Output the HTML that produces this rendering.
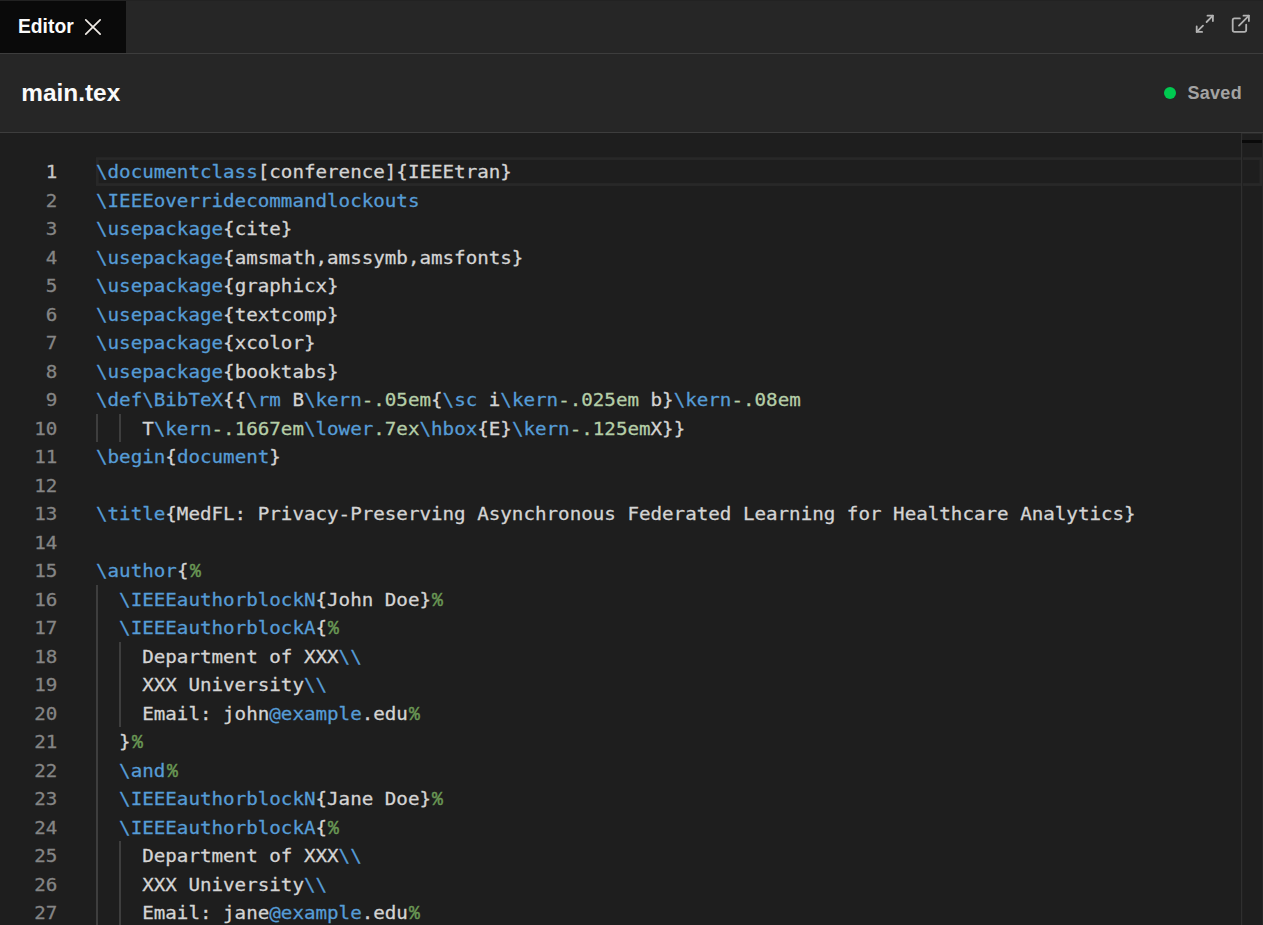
<!DOCTYPE html>
<html lang="en">
<head>
<meta charset="utf-8">
<title>Editor - main.tex</title>
<style>
html,body{margin:0;padding:0;}
body{width:1263px;height:925px;overflow:hidden;background:#262626;position:relative;font-family:"Liberation Sans",sans-serif;}
.abs{position:absolute;}
#topline{left:0;top:0;width:1263px;height:1px;background:#222222;}
#tab{left:0;top:1px;width:126px;height:52px;background:#0a0a0a;}
#tabtxt{left:17.7px;top:12px;font-size:20.4px;transform:scaleX(0.945);transform-origin:0 0;font-weight:bold;color:#fafafa;line-height:28px;white-space:nowrap;}
#tabborder{left:0;top:53px;width:1263px;height:1px;background:#3d3d3d;}
#title{left:21.3px;top:77px;font-size:24.4px;font-weight:bold;color:#fafafa;line-height:32px;white-space:nowrap;}
#hdrborder{left:0;top:132px;width:1263px;height:1px;background:#3d3d3d;}
#dot{left:1164px;top:86.8px;width:12.2px;height:12.2px;border-radius:50%;background:#00c950;}
#saved{left:1187.6px;top:80px;font-size:18px;letter-spacing:0.25px;font-weight:bold;color:#a3a3a3;line-height:26px;white-space:nowrap;}
#editor{left:0;top:133px;width:1262px;height:792px;background:#1e1e1e;overflow:hidden;}
#ed{-webkit-text-stroke:0.3px;position:absolute;left:0;top:-133px;width:1262px;height:925px;font-family:"DejaVu Sans Mono","Liberation Mono",monospace;font-size:19.2px;line-height:28.5px;color:#d4d4d4;}
.ln{transform:scaleY(0.92);transform-origin:0 19.8px;position:absolute;left:0;width:57.3px;text-align:right;color:#858585;height:28.5px;white-space:pre;}
.ln.a{color:#c6c6c6;}
.cl{transform:scaleY(0.92);transform-origin:0 19.8px;position:absolute;left:96px;height:28.5px;white-space:pre;}
.k{color:#569cd6;}
.c{color:#6a9955;display:inline-block;font-family:"Liberation Mono",monospace;font-size:21.5px;transform:scaleX(0.84);transform-origin:0 50%;position:relative;left:1.2px;-webkit-text-stroke:0.5px;}
.n{color:#b5cea8;}
.ig{position:absolute;width:2px;background:#3e3e3e;}
#vline{left:1241px;top:133px;width:1px;height:792px;background:#2f2f2f;box-shadow:1px 0 0 #212121;}
#ovtop{left:1242px;top:133px;width:20px;height:1px;background:#2a2a2a;}
#ovcur{left:1242.2px;top:139.9px;width:19.8px;height:3px;background:#0a0a0a;}
svg{position:absolute;overflow:visible;}
</style>
</head>
<body>
<div id="topline" class="abs"></div>
<div id="tab" class="abs"></div>
<div id="tabtxt" class="abs">Editor</div>
<svg id="xicon" style="left:84px;top:18.2px" width="18" height="18" viewBox="0 0 18 18"><path d="M1.75 1.8 L16.15 16.2 M16.15 1.8 L1.75 16.2" stroke="#f0ebe6" stroke-width="1.7" stroke-linecap="round" fill="none"/></svg>
<svg id="ic1" style="left:1193.9px;top:12.5px" width="21.6" height="21.6" viewBox="0 0 24 24" fill="none" stroke="#b2b2b2" stroke-width="2" stroke-linecap="round" stroke-linejoin="round"><polyline points="15 3 21 3 21 9"/><polyline points="9 21 3 21 3 15"/><line x1="21" x2="14" y1="3" y2="10"/><line x1="3" x2="10" y1="21" y2="14"/></svg>
<svg id="ic2" style="left:1229.7px;top:12.5px" width="21.6" height="21.6" viewBox="0 0 24 24" fill="none" stroke="#b2b2b2" stroke-width="2" stroke-linecap="round" stroke-linejoin="round"><path d="M15 3h6v6"/><path d="M10 14 21 3"/><path d="M18 13v6a2 2 0 0 1-2 2H5a2 2 0 0 1-2-2V8a2 2 0 0 1 2-2h6"/></svg>
<div id="tabborder" class="abs"></div>
<div id="title" class="abs">main.tex</div>
<div id="dot" class="abs"></div>
<div id="saved" class="abs">Saved</div>
<div id="hdrborder" class="abs"></div>
<div id="editor" class="abs">
<div id="ed">
<svg id="curline" style="left:0;top:0" width="1263" height="925"><rect x="97.3" y="158.55" width="1163.6" height="26.0" fill="none" stroke="#282828" stroke-width="2.7"/></svg>
<div class="ig" style="left:96.00px;top:413.70px;height:28.50px"></div>
<div class="ig" style="left:119.00px;top:413.70px;height:28.50px"></div>
<div class="ig" style="left:96.00px;top:584.70px;height:370.50px"></div>
<div class="ig" style="left:119.00px;top:641.70px;height:85.50px"></div>
<div class="ig" style="left:119.00px;top:841.20px;height:114.00px"></div>
<div class="ln a" style="top:158.20px">1</div>
<div class="cl" style="top:158.20px"><span class="k">\documentclass</span><span>[conference]{IEEEtran}</span></div>
<div class="ln" style="top:186.70px">2</div>
<div class="cl" style="top:186.70px"><span class="k">\IEEEoverridecommandlockouts</span></div>
<div class="ln" style="top:215.20px">3</div>
<div class="cl" style="top:215.20px"><span class="k">\usepackage</span><span>{cite}</span></div>
<div class="ln" style="top:243.70px">4</div>
<div class="cl" style="top:243.70px"><span class="k">\usepackage</span><span>{amsmath,amssymb,amsfonts}</span></div>
<div class="ln" style="top:272.20px">5</div>
<div class="cl" style="top:272.20px"><span class="k">\usepackage</span><span>{graphicx}</span></div>
<div class="ln" style="top:300.70px">6</div>
<div class="cl" style="top:300.70px"><span class="k">\usepackage</span><span>{textcomp}</span></div>
<div class="ln" style="top:329.20px">7</div>
<div class="cl" style="top:329.20px"><span class="k">\usepackage</span><span>{xcolor}</span></div>
<div class="ln" style="top:357.70px">8</div>
<div class="cl" style="top:357.70px"><span class="k">\usepackage</span><span>{booktabs}</span></div>
<div class="ln" style="top:386.20px">9</div>
<div class="cl" style="top:386.20px"><span class="k">\def\BibTeX</span><span>{{</span><span class="k">\rm</span><span> B</span><span class="k">\kern</span><span class="n">-.05em</span><span>{</span><span class="k">\sc</span><span> i</span><span class="k">\kern</span><span class="n">-.025em</span><span> b}</span><span class="k">\kern</span><span class="n">-.08em</span></div>
<div class="ln" style="top:414.70px">10</div>
<div class="cl" style="top:414.70px"><span>    T</span><span class="k">\kern</span><span class="n">-.1667em</span><span class="k">\lower</span><span class="n">.7ex</span><span class="k">\hbox</span><span>{E}</span><span class="k">\kern</span><span class="n">-.125em</span><span>X}}</span></div>
<div class="ln" style="top:443.20px">11</div>
<div class="cl" style="top:443.20px"><span class="k">\begin</span><span>{</span><span class="k">document</span><span>}</span></div>
<div class="ln" style="top:471.70px">12</div>
<div class="ln" style="top:500.20px">13</div>
<div class="cl" style="top:500.20px"><span class="k">\title</span><span>{MedFL: Privacy-Preserving Asynchronous Federated Learning for Healthcare Analytics}</span></div>
<div class="ln" style="top:528.70px">14</div>
<div class="ln" style="top:557.20px">15</div>
<div class="cl" style="top:557.20px"><span class="k">\author</span><span>{</span><span class="c">%</span></div>
<div class="ln" style="top:585.70px">16</div>
<div class="cl" style="top:585.70px"><span>  </span><span class="k">\IEEEauthorblockN</span><span>{John Doe}</span><span class="c">%</span></div>
<div class="ln" style="top:614.20px">17</div>
<div class="cl" style="top:614.20px"><span>  </span><span class="k">\IEEEauthorblockA</span><span>{</span><span class="c">%</span></div>
<div class="ln" style="top:642.70px">18</div>
<div class="cl" style="top:642.70px"><span>    Department of XXX</span><span class="k">\\</span></div>
<div class="ln" style="top:671.20px">19</div>
<div class="cl" style="top:671.20px"><span>    XXX University</span><span class="k">\\</span></div>
<div class="ln" style="top:699.70px">20</div>
<div class="cl" style="top:699.70px"><span>    Email: john</span><span class="k">@example</span><span>.edu</span><span class="c">%</span></div>
<div class="ln" style="top:728.20px">21</div>
<div class="cl" style="top:728.20px"><span>  }</span><span class="c">%</span></div>
<div class="ln" style="top:756.70px">22</div>
<div class="cl" style="top:756.70px"><span>  </span><span class="k">\and</span><span class="c">%</span></div>
<div class="ln" style="top:785.20px">23</div>
<div class="cl" style="top:785.20px"><span>  </span><span class="k">\IEEEauthorblockN</span><span>{Jane Doe}</span><span class="c">%</span></div>
<div class="ln" style="top:813.70px">24</div>
<div class="cl" style="top:813.70px"><span>  </span><span class="k">\IEEEauthorblockA</span><span>{</span><span class="c">%</span></div>
<div class="ln" style="top:842.20px">25</div>
<div class="cl" style="top:842.20px"><span>    Department of XXX</span><span class="k">\\</span></div>
<div class="ln" style="top:870.70px">26</div>
<div class="cl" style="top:870.70px"><span>    XXX University</span><span class="k">\\</span></div>
<div class="ln" style="top:899.20px">27</div>
<div class="cl" style="top:899.20px"><span>    Email: jane</span><span class="k">@example</span><span>.edu</span><span class="c">%</span></div>
<div id="vline" class="abs"></div>
<div id="ovtop" class="abs"></div>
<div id="ovcur" class="abs"></div>
</div>
</div>
</body>
</html>
